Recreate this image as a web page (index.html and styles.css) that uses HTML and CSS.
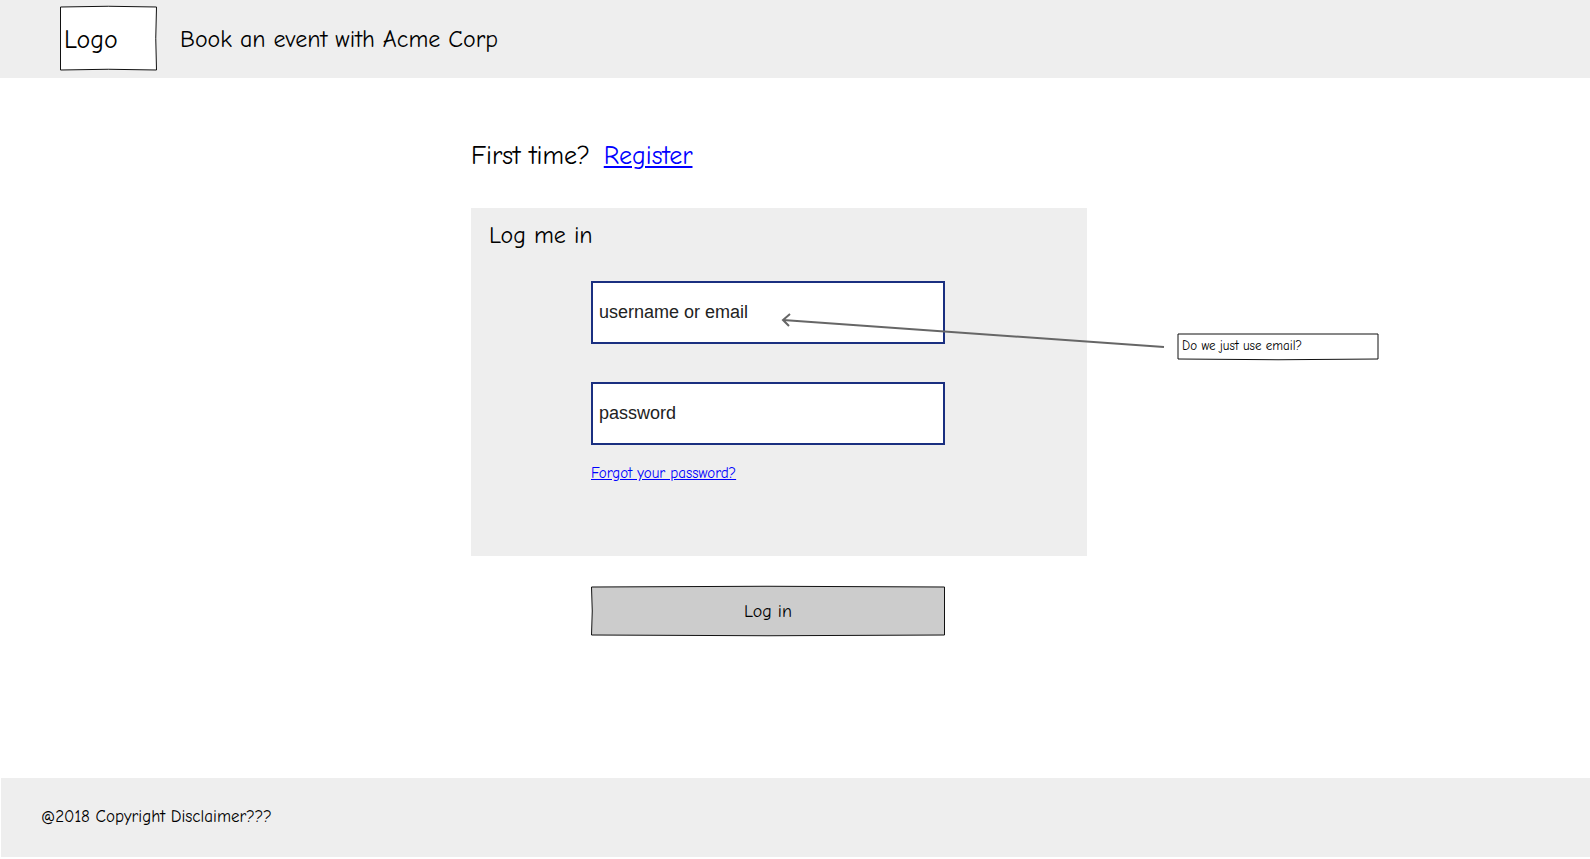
FILE: index.html
```html
<!DOCTYPE html>
<html lang="en">
<head>
<meta charset="utf-8">
<meta name="viewport" content="width=device-width, initial-scale=1">
<title>Book an event with Acme Corp</title>
<link rel="stylesheet" href="styles.css">
</head>
<body>
<header class="site-header">
  <div class="logo sketch">
    <svg class="outline" viewBox="0 0 97 65" preserveAspectRatio="none" aria-hidden="true"><path fill="#fff" d="M.5 1Q48-.5 96.500 1Q95 32 96.500 64Q48 62.500.5 64Z"/></svg>
    <span>Logo</span>
  </div>
  <h1 class="heading">Book an event with Acme Corp</h1>
</header>
<main class="content">
  <div class="center">
    <p class="heading intro">First time? <a class="link" href="#register">Register</a></p>
    <form class="login">
      <section class="panel">
        <h2 class="heading">Log me in</h2>
        <div class="fields">
          <input class="field" type="text" name="user" aria-label="username or email" placeholder="username or email">
          <input class="field" type="password" name="password" aria-label="password" placeholder="password">
          <a class="link forgot" href="#forgot">Forgot your password?</a>
        </div>
      </section>
      <button class="submit sketch" type="submit">
        <svg class="outline" viewBox="0 0 354 50" preserveAspectRatio="none" aria-hidden="true"><path fill="#ccc" d="M.5 1Q177-.5 353.500 1V49Q177 50.500.5 49Q2 25 .5 1Z"/></svg>
        <span>Log in</span>
      </button>
    </form>
  </div>
  <aside class="note sketch">
    <svg class="outline" viewBox="0 0 202 27" preserveAspectRatio="none" aria-hidden="true"><path fill="#fff" d="M1 1H201V26Q101 27.500 1 26Z"/></svg>
    <span>Do we just use email?</span>
    <svg class="arrow" viewBox="0 0 384 40" aria-hidden="true"><path d="M383 34L2 7M9 1L2 7L8 13"/></svg>
  </aside>
</main>
<footer class="site-footer">@2018 Copyright Disclaimer???</footer>
</body>
</html>
```
FILE: styles.css
```css
* { box-sizing: border-box; }

body {
  margin: 0;
  min-height: 100vh;
  display: flex;
  flex-direction: column;
  background: #fff;
  color: #000;
  font-family: "Comic Neue", "Comic Sans MS", "Open Sans", sans-serif;
  font-size: 17px;
  line-height: 24px;
}

.heading {
  margin: 0;
  font-size: 24px;
  font-weight: 400;
  line-height: 32px;
}

.link { color: #00f; }

.sketch { position: relative; }
.sketch > span { position: relative; }

.outline {
  position: absolute;
  top: 0;
  left: 0;
  width: 100%;
  height: 100%;
  overflow: visible;
}

.outline path {
  stroke: #111;
  stroke-width: 1;
  vector-effect: non-scaling-stroke;
}

.site-header {
  display: flex;
  align-items: center;
  gap: 23px;
  padding: 6px 60px 7px;
  background: #eee;
}

.logo {
  width: 97px;
  padding: 18px 4px 15px;
  font-size: 26px;
  line-height: 32px;
}

.content {
  flex: 1;
  display: grid;
  grid-template-columns: 1fr minmax(auto, 616px) 1fr;
  padding: 62px 32px 0 0;
}

.center { grid-column: 2; }

.intro {
  margin-bottom: 36px;
  font-size: 26px;
}

.intro .link { margin-left: 5px; }

.panel {
  padding: 11px 18px 73px;
  background: #eee;
}

.fields {
  display: flex;
  flex-direction: column;
  align-items: flex-start;
  padding: 30px 124px 0 102px;
}

.field {
  width: 100%;
  height: 63px;
  margin: 0 0 38px;
  padding: 0 6px;
  border: 2px solid #1a2f80;
  border-radius: 0;
  background: #fff;
  font: 18px "Liberation Sans", Arial, sans-serif;
}

.field::placeholder { color: #222; opacity: 1; }

.field + .forgot { margin-top: -20px; }

.forgot { font-size: 15px; line-height: 20px; }

.submit {
  display: block;
  width: 354px;
  height: 50px;
  margin: 30px 0 0 120px;
  padding: 2px 0 0;
  border: 0;
  background: none;
  color: #000;
  font: inherit;
  font-size: 18px;
}

.note {
  align-self: start;
  width: 202px;
  margin: 193px 0 0 90px;
  padding: 3px 5px 4px;
  font-size: 13px;
  line-height: 20px;
}

.arrow {
  position: absolute;
  right: calc(100% + 12px);
  top: -20px;
  width: 384px;
  height: 40px;
  fill: none;
  stroke: #666;
  stroke-width: 2;
  pointer-events: none;
}

.site-footer {
  margin: 0 0 2px 1px;
  padding: 27px 40px 28px;
  background: #eee;
}
```
